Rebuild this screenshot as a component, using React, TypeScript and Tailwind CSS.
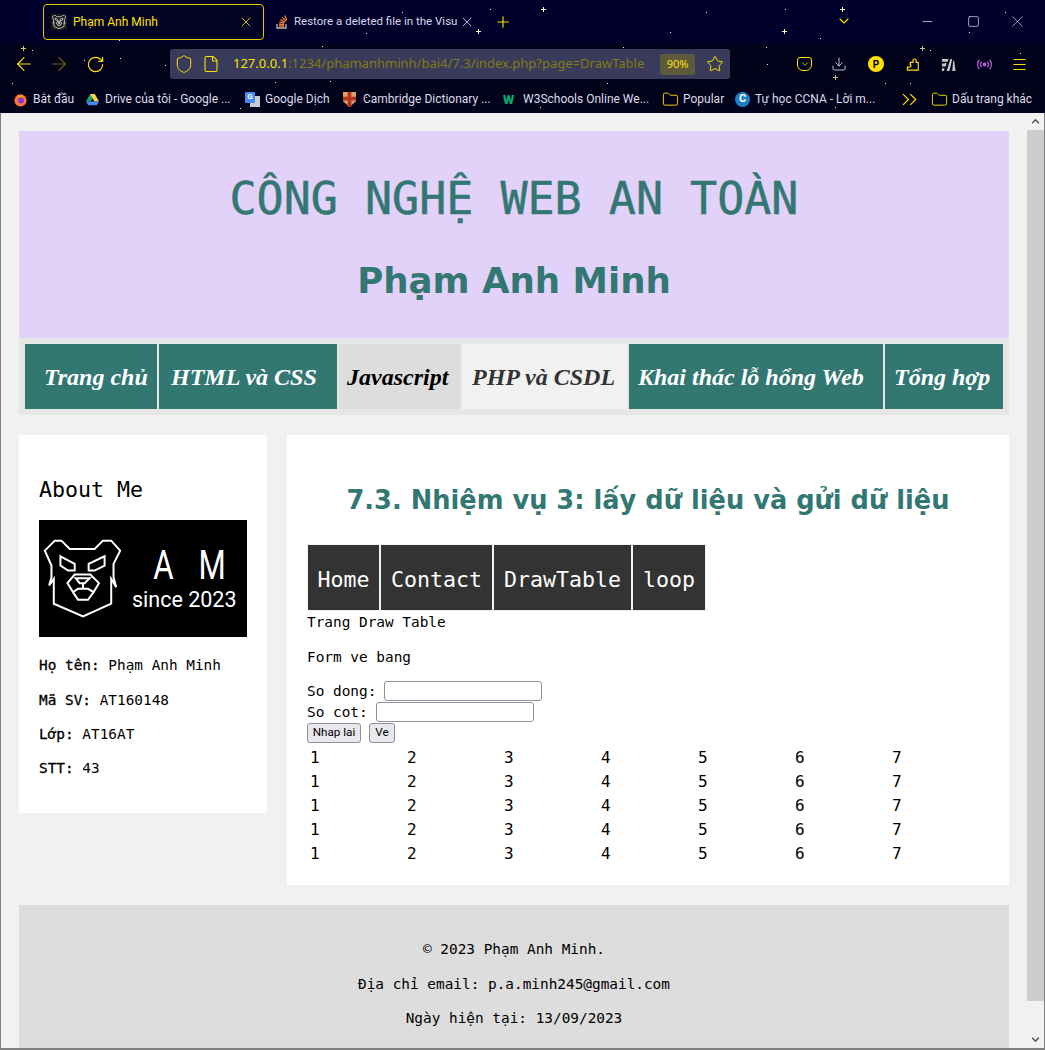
import React from "react";
import { ArrowLeft, ArrowRight, RotateCw, Shield, File, Star, Download, Menu, X, Plus, ChevronDown, ChevronsRight, Folder, Minus, Square } from "lucide-react";

const mono = "font-['DejaVu_Sans_Mono','Liberation_Mono',monospace]";
const ui = "font-['Roboto','Open_Sans',sans-serif]";
const url = "font-['Noto_Sans','Open_Sans',sans-serif]";
const script = "font-['Liberation_Serif',serif] italic font-bold";
const semi = "font-normal [-webkit-text-stroke:0.3px]";

const stars: [number, number, number][] = [
  [32,50,1],[84,60,1],[120,58,1],[165,65,1],[119,40,1],[366,97,1],[402,12,1],[490,9,1],[366,33,1],[322,46,1],[706,12,1],[785,9,1],[670,32,1],[820,38,1],[1005,12,1],[969,32,1],[930,50,1],[1020,53,1],[766,47,1],[623,47,1],[910,83,1],[945,63,1],[767,64,1],[240,108,1],[540,107,1],[835,107,1],[330,81,1],[12,83,1],[275,82,1],[607,83,1],[885,83,1],
];
const pluses: [number, number, string][] = [
  [23,48,"#d8c860"],[478,31,"#ffffc0"],[543,9,"#ffffc0"],[784,31,"#ffffc0"],[842,9,"#ffffc0"],[922,48,"#c8c080"],[835,77,"#c8c080"],
];

function Bookmark({ icon, text, w }: { icon: React.ReactNode; text: string; w: string }) {
  return (
    <div className={`${w} flex items-center shrink-0`}>
      <span className="w-[20px] shrink-0 flex items-center">{icon}</span>
      <span className={`${ui} text-[12px] text-[#dcdcea] whitespace-nowrap`}>{text}</span>
    </div>
  );
}

function Bear({ className, w = 6 }: { className?: string; w?: number }) {
  return (
    <svg viewBox="70 205 237 238" className={className} fill="none" stroke="currentColor" strokeWidth={w} strokeLinejoin="miter">
      <path d="M105 210 L75 240 L95 285 L95 320 L88 345 L102 325 L102 400 L190 438 L275 400 L275 325 L290 350 L282 320 L282 280 L302 240 L275 210 L250 210 L225 235 L150 235 L125 210 Z" />
      <path d="M122 257 L165 280 L165 300 L145 300 L122 285 Z" />
      <path d="M255 257 L207 280 L207 300 L225 300 L255 285 Z" />
      <path d="M165 312 L143 338 L160 365 L175 355 L205 355 L222 365 L238 338 L212 312 Z" />
      <path d="M168 323 L210 323 L195 338 L180 338 Z" />
      <path d="M190 338 L190 355 M160 365 L175 388 L205 388 L222 365" />
    </svg>
  );
}

export default function App() {
  const nav = [
    { t: "Trang chủ", w: "w-[132px] pl-[19px]", c: "bg-[#337773] text-white" },
    { t: "HTML và CSS", w: "w-[178px] pl-[12px]", c: "bg-[#337773] text-white" },
    { t: "Javascript", w: "w-[121px] pl-[8px]", c: "bg-[#dddddd] text-black" },
    { t: "PHP và CSDL", w: "w-[165px] pl-[10px]", c: "bg-[#f1f1f1] text-[#333333]" },
    { t: "Khai thác lỗ hổng Web", w: "w-[254px] pl-[9px]", c: "bg-[#337773] text-white" },
    { t: "Tổng hợp", w: "w-[118px] pl-[9px]", c: "bg-[#337773] text-white" },
  ];
  const links = [
    { t: "Home", w: "w-[71px]" },
    { t: "Contact", w: "w-[111px]" },
    { t: "DrawTable", w: "w-[137px]" },
    { t: "loop", w: "w-[72px]" },
  ];
  return (
    <div className={`${mono} w-[1045px] h-[1050px] overflow-hidden relative bg-[#f1f1f1] flex flex-col text-[14.4px] text-black`}>
      {/* Browser chrome */}
      <div className="relative h-[113px] shrink-0 bg-[#02021a] text-[#ffe100]">
        <div className="h-[43px] bg-[#00002b] flex items-start pl-[43px] pt-[4px]">
          <div className="w-[221px] h-[36px] border border-[#e6c800] rounded-[4px] bg-[#020222] flex items-center pl-[7px] pr-[9px] shrink-0">
            <div className="w-4 h-4 bg-[#1a1a1a] text-[#d8d8d8] flex items-center justify-center shrink-0"><Bear className="w-[14px] h-[14px]" w={14} /></div>
            <span className={`${ui} text-[12px] ml-[6px] text-[#ffe100] flex-1`}>Phạm Anh Minh</span>
            <X size={16} strokeWidth={1.3} />
          </div>
          <div className="w-[215px] h-[36px] flex items-center pl-[10px] shrink-0">
            <svg viewBox="0 0 16 16" className="w-4 h-4 shrink-0" fill="none">
              <path d="M3 10v4h9v-4" stroke="#bcbbbb" strokeWidth="1.3" />
              <path d="M5 12h5M5 10.2l5 .4M5.4 8l5 1.2M6.5 5.6l4.4 2.4M8.3 3.4l3.6 3.6M10.8 1.6l2 4.6" stroke="#f48024" strokeWidth="1.3" />
            </svg>
            <span className={`${ui} text-[11.5px] ml-[4px] text-[#d8d8e8] whitespace-nowrap w-[165px] shrink-0`}>Restore a deleted file in the Visu</span>
            <X size={16} strokeWidth={1.3} className="text-[#d8d8e8] shrink-0" />
          </div>
          <Plus size={18} strokeWidth={1.5} className="mt-[9px] ml-[15px] shrink-0" />
          <ChevronDown size={16} strokeWidth={1.6} className="mt-[9px] ml-[324px] shrink-0" />
          <Minus size={15} strokeWidth={1.2} className="mt-[10px] ml-[68px] shrink-0 text-[#e0e0f0]" />
          <Square size={13} strokeWidth={1.3} className="mt-[11px] ml-[32px] shrink-0 text-[#e0e0f0]" />
          <X size={19} strokeWidth={0.9} className="mt-[8px] ml-[28px] shrink-0 text-[#e0e0f0]" />
        </div>
        <div className="h-[42px] flex items-center">
          <ArrowLeft size={22} strokeWidth={1.2} className="ml-[13px] shrink-0" />
          <ArrowRight size={22} strokeWidth={1.2} className="ml-[13px] text-[#6f6410] shrink-0" />
          <RotateCw size={19} strokeWidth={1.5} className="ml-[16px] shrink-0" />
          <div className="ml-[65px] w-[560px] h-[30px] bg-[#383b59] rounded-[3px] flex items-center pl-[4px] shrink-0">
            <Shield size={20} strokeWidth={1.2} className="shrink-0" />
            <File size={18} strokeWidth={1.4} className="ml-[8px] shrink-0" />
            <span className={`${url} text-[13px] ml-[13px] whitespace-nowrap w-[427px] shrink-0`}>
              <span className="text-[#ffe100]">127.0.0.1</span>
              <span className="text-[#857a12]">:1234/phamanhminh/bai4/7.3/index.php?page=DrawTable</span>
            </span>
            <span className={`${url} text-[11px] w-[35px] h-[21px] rounded-[3px] bg-[#5d5a3c] flex items-center justify-center shrink-0`}>90%</span>
            <Star size={18} strokeWidth={1.3} className="ml-[11px] shrink-0" />
          </div>
          <div className="ml-[67px] w-[15px] h-[14px] border-[1.5px] border-[#ffe100] rounded-t-[3px] rounded-b-[6px] flex items-center justify-center shrink-0">
            <ChevronDown size={10} strokeWidth={2} />
          </div>
          <Download size={16} strokeWidth={1.3} className="ml-[19px] text-[#dcdcfa] shrink-0" />
          <span className={`${ui} ml-[21px] w-4 h-4 rounded-full bg-[#ffe100] text-black text-[10px] font-bold flex items-center justify-center shrink-0`}>P</span>
          <svg viewBox="0 0 16 16" className="ml-[22px] w-[14px] h-[15px] shrink-0" fill="none" stroke="#ffe100" strokeWidth="1.3">
            <path d="M5 5.5H8V3.5a1.8 1.8 0 0 1 3.6 0V5.5H14V14.5H1.5V11H4a1.7 1.7 0 0 0 0-3.5H5z" />
          </svg>
          <svg viewBox="0 0 16 16" className="ml-[21px] w-[15px] h-[15px] shrink-0" fill="#c8c8c8">
            <path d="M1 2h7l-1 3H1zM1 7h5l-1 3H1zM1 12h3l-1 3H1zM10 2h2l-3 13H6zM13 4h1l1.500 11H12z" />
          </svg>
          <svg viewBox="0 0 16 16" className="ml-[21px] w-[15px] h-[15px] shrink-0" fill="none" stroke="#b05fd0" strokeWidth="1.5">
            <circle cx="8" cy="8" r="1.4" fill="#b05fd0" />
            <path d="M5 5a4 4 0 0 0 0 6M11 5a4 4 0 0 1 0 6M2.500 3a8 8 0 0 0 0 10M13.500 3a8 8 0 0 1 0 10" />
          </svg>
          <Menu size={17} strokeWidth={1.4} className="ml-[19px] shrink-0" />
        </div>
        <div className="h-[28px] pl-[13px] flex items-center">
          <Bookmark w="w-[72px]" text="Bắt đầu" icon={
            <svg viewBox="0 0 16 16" className="w-[15px] h-[15px]"><circle cx="8" cy="9" r="6.500" fill="#ff7139" /><path d="M4 3l2 3 4-3 1 3" fill="#ffb000" /><circle cx="8.500" cy="9" r="3.200" fill="#7b3ed0" /></svg>
          } />
          <Bookmark w="w-[160px]" text="Drive của tôi - Google ..." icon={
            <svg viewBox="0 0 16 16" className="w-[15px] h-[15px]"><path d="M5.500 2h5L6 10H1z" fill="#1fa463" /><path d="M10.500 2L15 10h-5L5.500 2z" fill="#ffd04b" /><path d="M1 10h14l-2.500 4h-9z" fill="#4688f4" /></svg>
          } />
          <Bookmark w="w-[98px]" text="Google Dịch" icon={
            <span className="w-[15px] h-[15px] relative block">
              <span className="absolute right-0 bottom-0 w-[10px] h-[11px] bg-[#c8ccd0]" />
              <span className={`${ui} absolute left-0 top-0 w-[10px] h-[11px] rounded-[1px] bg-[#4a8af4] text-white text-[8px] font-bold flex items-center justify-center`}>G</span>
            </span>
          } />
          <Bookmark w="w-[160px]" text="Cambridge Dictionary ..." icon={
            <svg viewBox="0 0 14 16" className="w-[13px] h-[15px]"><path d="M0 0h14v10l-7 6-7-6z" fill="#d9a066" /><path d="M5 0h4v16H5zM0 5h14v4H0z" fill="#b8331f" /></svg>
          } />
          <Bookmark w="w-[160px]" text="W3Schools Online We..." icon={<span className={`${ui} text-[13px] font-black text-[#04aa6d] leading-none`}>W</span>} />
          <Bookmark w="w-[72px]" text="Popular" icon={<Folder size={17} strokeWidth={1.3} className="-ml-[1px]" />} />
          <Bookmark w="w-[162px]" text="Tự học CCNA - Lời m..." icon={
            <span className={`${ui} w-[15px] h-[15px] rounded-full bg-[#1c7fc8] text-white text-[11px] font-bold flex items-center justify-center`}>C</span>
          } />
          <ChevronsRight size={25} strokeWidth={1.1} className="shrink-0" />
          <div className="ml-[10px]">
            <Bookmark w="w-[105px]" text="Dấu trang khác" icon={<Folder size={17} strokeWidth={1.3} className="-ml-[1px]" />} />
          </div>
        </div>
        {stars.map(([x, y], i) => <span key={i} className="absolute w-px h-px bg-[#fff7a0]" style={{ left: x, top: y }} />)}
        {pluses.map(([x, y, c], i) => (
          <span key={`p${i}`} className="absolute w-[5px] h-[5px]" style={{ left: x - 2, top: y - 2 }}>
            <span className="absolute left-0 top-[2px] w-[5px] h-px" style={{ background: c }} />
            <span className="absolute left-[2px] top-0 w-px h-[5px]" style={{ background: c }} />
          </span>
        ))}
      </div>

      {/* Page */}
      <div className="flex flex-1 min-h-0 border-l border-r border-b-2 border-[#808080]">
        <div className="w-[1026px] pt-[18px] pl-[18px] pr-[18px] shrink-0 overflow-hidden">
          <div className="h-[207px] bg-[#e2d1f9] flex flex-col items-center text-[#337773]">
            <h1 className="text-[45px] leading-[52px] mt-[42px] whitespace-nowrap [-webkit-text-stroke:0.5px]">CÔNG NGHỆ WEB AN TOÀN</h1>
            <h2 className="font-['DejaVu_Sans',sans-serif] font-bold text-[35.6px] leading-[42px] mt-[35px] whitespace-nowrap">Phạm Anh Minh</h2>
          </div>
          <div className="h-[77px] bg-[#e6e6e6] p-[6px] flex gap-[2px]">
            {nav.map((n) => (
              <div key={n.t} className={`${n.w} ${n.c} ${script} h-[65px] flex items-center text-[24px] whitespace-nowrap overflow-hidden shrink-0`}>{n.t}</div>
            ))}
          </div>
          <div className="flex gap-[20px] mt-[20px] items-start">
            <div className="w-[248px] h-[378px] bg-white p-[20px] shrink-0">
              <h3 className="text-[21.6px] leading-[28px] mt-[21px]">About Me</h3>
              <div className="mt-[16px] w-[208px] h-[117px] bg-black text-white flex items-center pl-[4px]">
                <Bear className="w-[79px] h-[79px] shrink-0" />
                <div className="flex flex-col items-start ml-[10px] w-[110px] font-['Roboto',sans-serif]">
                  <span className="text-[40px] leading-[40px] flex gap-[32px] ml-[11px] scale-x-[0.78]"><span>A</span><span>M</span></span>
                  <span className="text-[21.5px] leading-[24px] whitespace-nowrap mt-[2px]">since 2023</span>
                </div>
              </div>
              <p className="mt-[20px] leading-[17px]"><b className={semi}>Họ tên:</b> Phạm Anh Minh</p>
              <p className="mt-[18px] leading-[17px]"><b className={semi}>Mã SV:</b> AT160148</p>
              <p className="mt-[17px] leading-[17px]"><b className={semi}>Lớp:</b> AT16AT</p>
              <p className="mt-[17px] leading-[17px]"><b className={semi}>STT:</b> 43</p>
            </div>
            <div className="w-[722px] h-[450px] bg-white px-[20px] shrink-0">
              <h2 className="font-['DejaVu_Sans',sans-serif] font-bold text-[25.7px] leading-[32px] text-[#337773] text-center mt-[49px] whitespace-nowrap">7.3. Nhiệm vụ 3: lấy dữ liệu và gửi dữ liệu</h2>
              <div className="mt-[28px] w-[399px] h-[67px] bg-[#f1f1f1] p-px flex gap-[2px]">
                {links.map((l) => (
                  <div key={l.t} className={`${l.w} h-[65px] pt-[5px] bg-[#333333] text-white text-[21.6px] flex items-center justify-center`}>{l.t}</div>
                ))}
              </div>
              <p className="leading-[17px] mt-[3px]">Trang Draw Table</p>
              <p className="leading-[17px] mt-[18px]">Form ve bang</p>
              <div className="mt-[14px] flex items-center h-[21px] gap-[8px]">
                <span className="pt-[2px]">So dong:</span>
                <input className="w-[158px] h-[20px] bg-white border border-[#8f8f9d] rounded-[3px]" />
              </div>
              <div className="flex items-center h-[21px] gap-[8px]">
                <span className="pt-[2px]">So cot:</span>
                <input className="w-[158px] h-[20px] bg-white border border-[#8f8f9d] rounded-[3px]" />
              </div>
              <div className={`${ui} flex gap-[8px] mt-[1px] text-[11.7px] text-black`}>
                <button className="h-[20px] w-[54px] bg-[#e9e9ed] border border-[#8f8f9d] rounded-[3px] leading-none">Nhap lai</button>
                <button className="h-[20px] w-[26px] bg-[#e9e9ed] border border-[#8f8f9d] rounded-[3px] leading-none">Ve</button>
              </div>
              <table className="mt-[2px] border-collapse text-[16px]">
                <tbody>
                  {[0, 1, 2, 3, 4].map((r) => (
                    <tr key={r} className="h-[24px]">
                      {[1, 2, 3, 4, 5, 6, 7].map((c) => (
                        <td key={c} className="w-[97px] pl-[3px] p-0 leading-[19px]">{c}</td>
                      ))}
                    </tr>
                  ))}
                </tbody>
              </table>
            </div>
          </div>
          <div className="mt-[20px] h-[200px] bg-[#dddddd] flex flex-col items-center pt-[36px]">
            <p className="leading-[17px]">© 2023 Phạm Anh Minh.</p>
            <p className="leading-[17px] mt-[18px]">Địa chỉ email: p.a.minh245@gmail.com</p>
            <p className="leading-[17px] mt-[17px]">Ngày hiện tại: 13/09/2023</p>
          </div>
        </div>
        {/* Scrollbar */}
        <div className="flex-1 bg-[#f1f1f1] flex flex-col items-center min-w-0">
          <div className="h-[17px] flex items-center justify-center shrink-0">
            <svg viewBox="0 0 10 6" className="w-[9px] h-[5px]" fill="none" stroke="#505050" strokeWidth="1.8"><path d="M1 5l4-4 4 4" /></svg>
          </div>
          <div className="w-full h-[871px] bg-[#cdcdcd] shrink-0" />
          <div className="mt-auto h-[17px] flex items-center justify-center shrink-0">
            <svg viewBox="0 0 10 6" className="w-[9px] h-[5px]" fill="none" stroke="#505050" strokeWidth="1.8"><path d="M1 1l4 4 4-4" /></svg>
          </div>
        </div>
      </div>
    </div>
  );
}
